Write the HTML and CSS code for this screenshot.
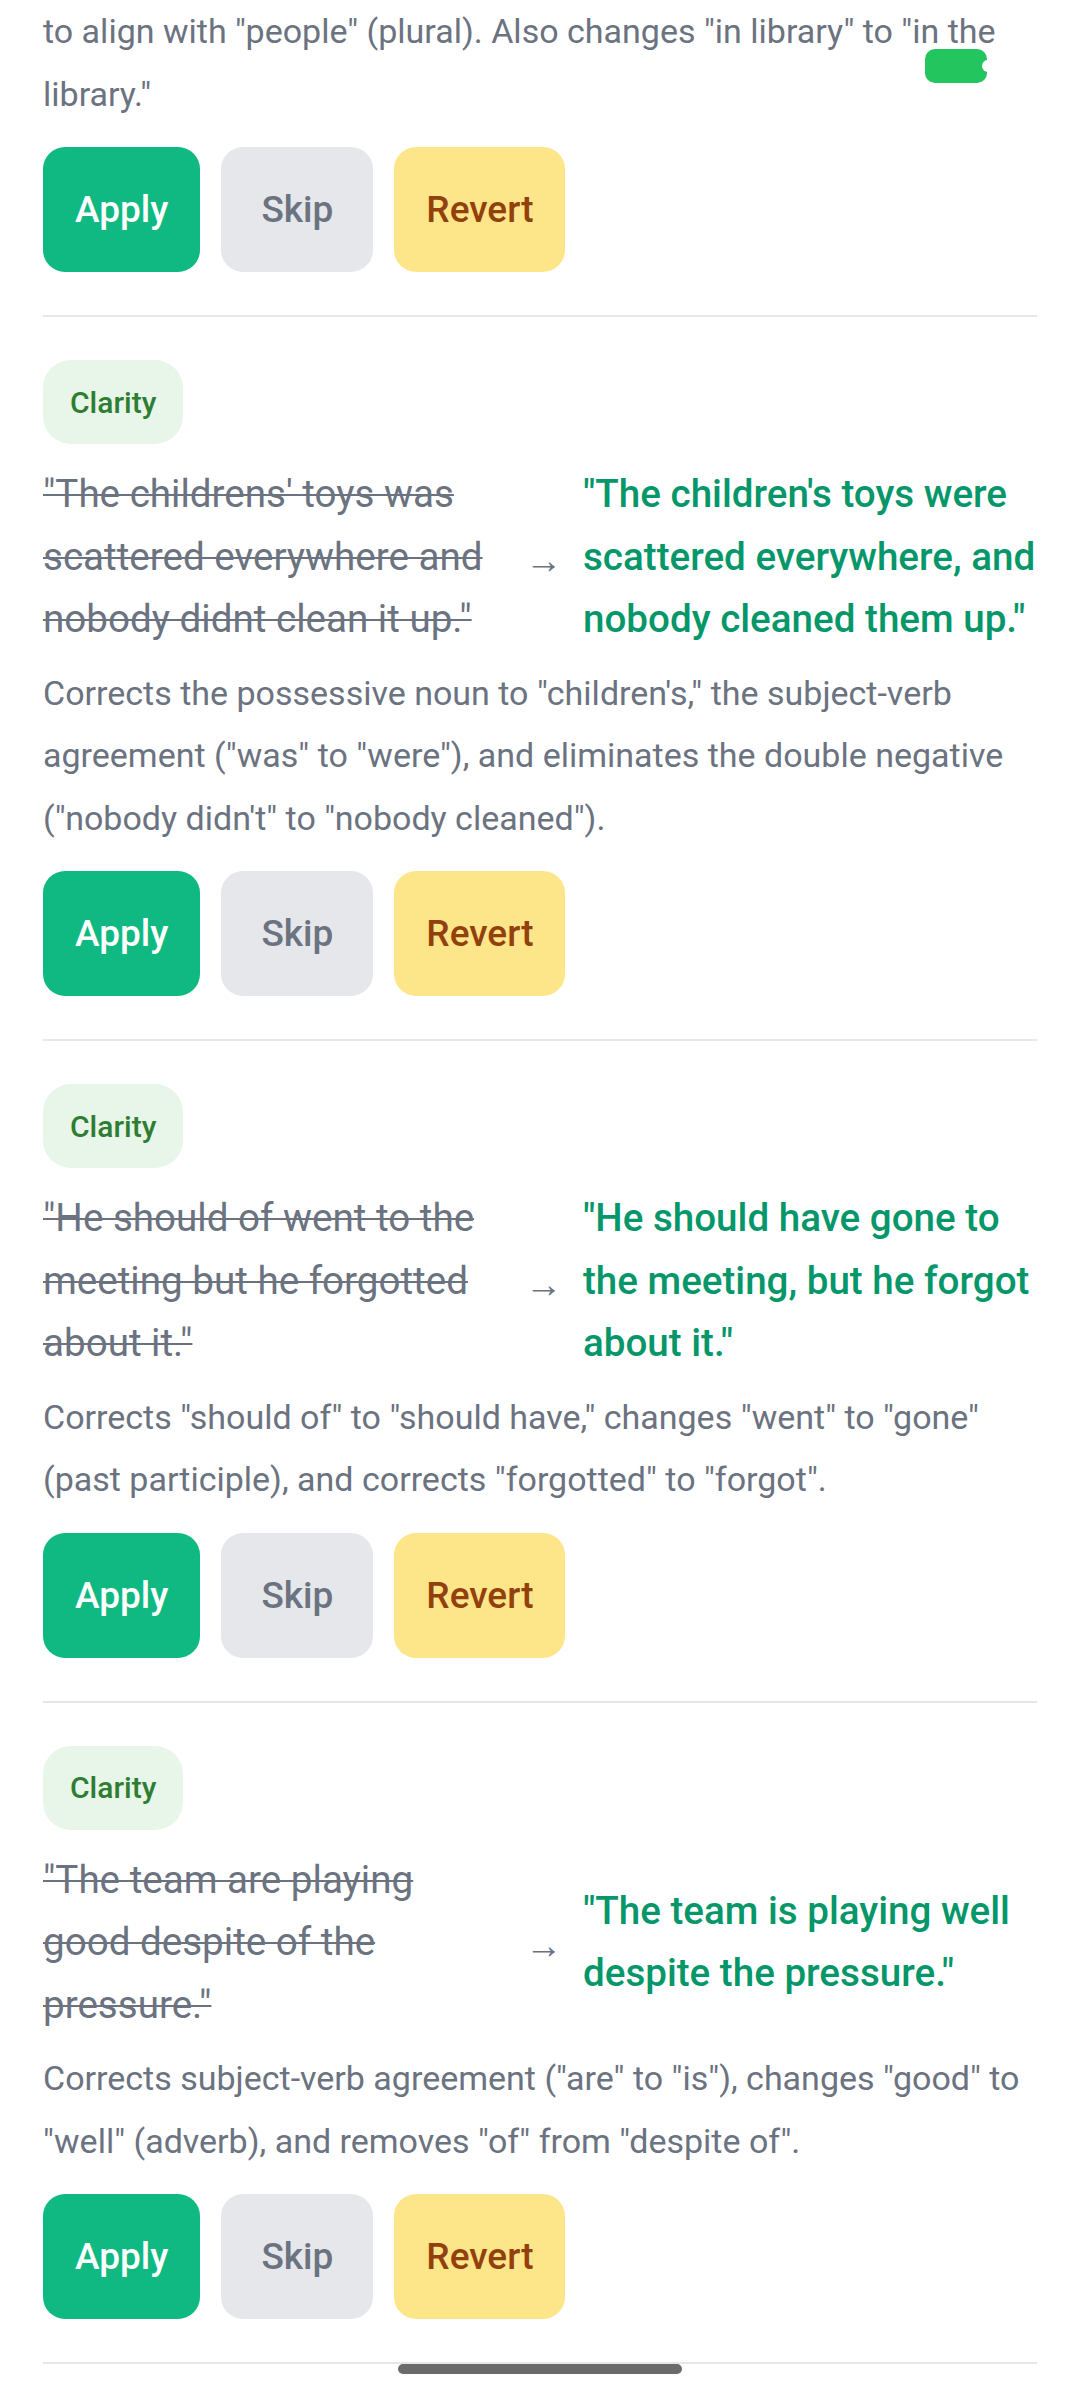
FILE: index.html
```html
<!DOCTYPE html>
<html lang="en">
<head>
<meta charset="utf-8">
<title>Suggestions</title>
<link rel="stylesheet" href="styles.css">
</head>
<body>
<main class="list">
  <section class="item item-partial">
    <p class="desc">to align with "people" (plural). Also changes "in library" to "in the library."</p>
    <div class="actions">
      <button class="btn btn-apply">Apply</button>
      <button class="btn btn-skip">Skip</button>
      <button class="btn btn-revert">Revert</button>
    </div>
  </section>

  <section class="item">
    <span class="tag">Clarity</span>
    <div class="change">
      <p class="old">"The childrens' toys was scattered everywhere and nobody didnt clean it up."</p>
      <span class="arrow">→</span>
      <p class="new">"The children's toys were scattered everywhere, and nobody cleaned them up."</p>
    </div>
    <p class="desc">Corrects the possessive noun to "children's," the subject-verb agreement ("was" to "were"), and eliminates the double negative ("nobody didn't" to "nobody cleaned").</p>
    <div class="actions">
      <button class="btn btn-apply">Apply</button>
      <button class="btn btn-skip">Skip</button>
      <button class="btn btn-revert">Revert</button>
    </div>
  </section>

  <section class="item">
    <span class="tag">Clarity</span>
    <div class="change">
      <p class="old">"He should of went to the meeting but he forgotted about it."</p>
      <span class="arrow">→</span>
      <p class="new">"He should have gone to the meeting, but he forgot about it."</p>
    </div>
    <p class="desc">Corrects "should of" to "should have," changes "went" to "gone" (past participle), and corrects "forgotted" to "forgot".</p>
    <div class="actions">
      <button class="btn btn-apply">Apply</button>
      <button class="btn btn-skip">Skip</button>
      <button class="btn btn-revert">Revert</button>
    </div>
  </section>

  <section class="item">
    <span class="tag">Clarity</span>
    <div class="change">
      <p class="old">"The team are playing good despite of the pressure."</p>
      <span class="arrow">→</span>
      <p class="new">"The team is playing well despite the pressure."</p>
    </div>
    <p class="desc">Corrects subject-verb agreement ("are" to "is"), changes "good" to "well" (adverb), and removes "of" from "despite of".</p>
    <div class="actions">
      <button class="btn btn-apply">Apply</button>
      <button class="btn btn-skip">Skip</button>
      <button class="btn btn-revert">Revert</button>
    </div>
  </section>
</main>

<svg class="mic-indicator" width="62" height="34" viewBox="0 0 62 34" aria-hidden="true">
  <rect x="0" y="0" width="62" height="34" rx="10" fill="#22c55e"/>
  <circle cx="63" cy="17" r="6" fill="#ffffff"/>
</svg>
<div class="home-bar"></div>
</body>
</html>
```
FILE: styles.css
```css
* { box-sizing: border-box; }
html, body {
  margin: 0;
  padding: 0;
  background: #ffffff;
}
body {
  width: 1080px;
  height: 2400px;
  overflow: hidden;
  position: relative;
  font-family: Roboto, "Noto Sans", "Liberation Sans", sans-serif;
}
.list {
  padding: 0 43px;
}
.item {
  display: flex;
  flex-direction: column;
  align-items: stretch;
  padding: 43px 0 43px;
  border-bottom: 2px solid #e5e7eb;
}
.item-partial {
  padding-top: 0;
}
.tag {
  align-self: flex-start;
  display: inline-flex;
  align-items: center;
  height: 84px;
  padding: 0 27px;
  border-radius: 28px;
  background: #e8f5e9;
  color: #2e7d32;
  font-size: 30px;
  font-weight: 500;
  margin-bottom: 19px;
}
.change {
  display: grid;
  grid-template-columns: 454px 30px 466px;
  column-gap: 28px;
  align-items: center;
  margin-bottom: 11px;
}
.old, .new {
  margin: 0;
  font-size: 38.6px;
  line-height: 62.5px;
}
.old {
  color: #6b7280;
  text-decoration: line-through;
  text-decoration-thickness: 2px;
}
.new {
  color: #059669;
  font-weight: 500;
}
.arrow {
  text-align: center;
  color: #6b7280;
  font-size: 37px;
  line-height: 62.5px;
  padding-top: 8px;
  padding-right: 6px;
}
.desc {
  margin: 0 0 22px;
  color: #6b7280;
  font-size: 34px;
  line-height: 62.5px;
}
.actions {
  display: flex;
  gap: 21px;
}
.btn {
  height: 125px;
  min-width: 152px;
  padding: 0 32px;
  border: none;
  border-radius: 22px;
  font-family: inherit;
  font-size: 37px;
  font-weight: 500;
}
.btn-apply {
  background: #10b981;
  color: #ffffff;
}
.btn-skip {
  background: #e5e7eb;
  color: #6b7280;
}
.btn-revert {
  background: #fde68a;
  color: #92400e;
}
.mic-indicator {
  position: absolute;
  left: 925px;
  top: 49px;
}
.home-bar {
  position: absolute;
  left: 398px;
  top: 2364px;
  width: 284px;
  height: 10px;
  border-radius: 5px;
  background: #6b6b6b;
}
```
